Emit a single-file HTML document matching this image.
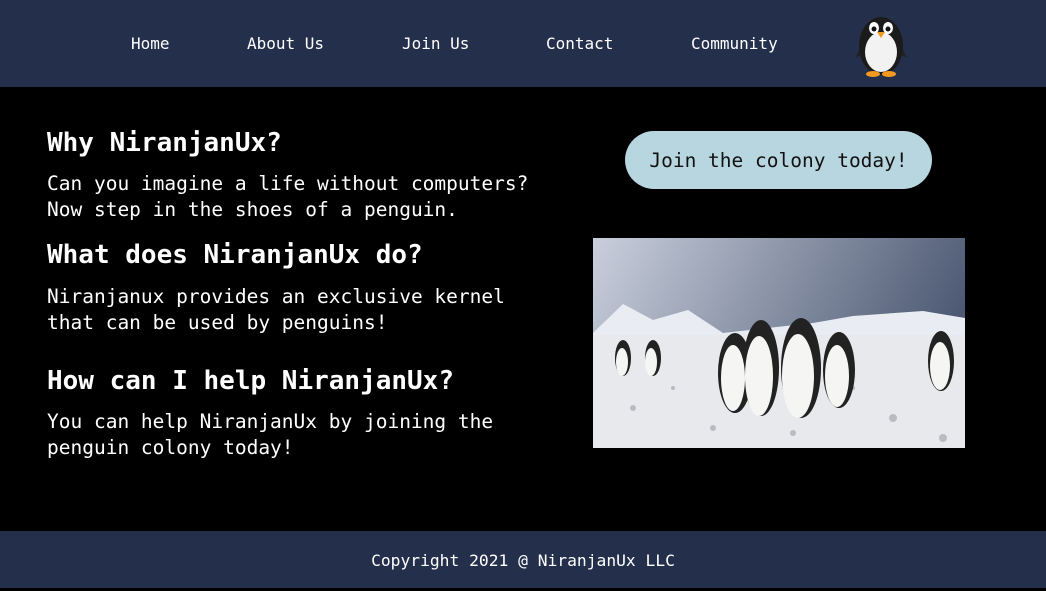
<!DOCTYPE html>
<html><head><style>
*{margin:0;padding:0;box-sizing:border-box}
body{width:1046px;height:588px;background:#000;font-family:"DejaVu Sans Mono","Liberation Mono",monospace;color:#fff;position:relative;overflow:hidden}
header{position:absolute;left:0;top:0;width:1046px;height:87px;background:#24304b}
nav a{position:absolute;top:34px;font-size:16px;color:#fff;text-decoration:none;white-space:nowrap}
footer{position:absolute;left:0;top:531px;width:1046px;height:57px;background:#24304b;text-align:center;font-size:16.3px;line-height:60px}
h2{position:absolute;left:47px;font-size:26px;font-weight:bold;white-space:nowrap}
p{position:absolute;left:47px;font-size:19.5px;line-height:26px;white-space:nowrap}
.btn{position:absolute;left:625px;top:131px;width:307px;height:58px;border-radius:29px;background:#b8d6e0;color:#111;font-size:19.5px;line-height:60px;text-align:center}
</style></head><body>
<header><nav>
<a style="left:131px">Home</a><a style="left:247px">About Us</a><a style="left:402px">Join Us</a><a style="left:546px">Contact</a><a style="left:691px">Community</a>
</nav>
<svg style="position:absolute;left:852px;top:8px" width="58" height="70" viewBox="0 0 58 70">
<path d="M8 40 L3 50 L14 44Z" fill="#222"/><path d="M50 40 L55 50 L44 44Z" fill="#222"/>
<ellipse cx="29" cy="38" rx="22" ry="29" fill="#1b1b1b"/>
<ellipse cx="29" cy="44" rx="16" ry="20" fill="#f2f2f2"/>
<ellipse cx="22" cy="20" rx="5" ry="6" fill="#fff"/><ellipse cx="36" cy="20" rx="5" ry="6" fill="#fff"/>
<circle cx="22" cy="21" r="2.5" fill="#111"/><circle cx="36" cy="21" r="2.5" fill="#111"/>
<path d="M25 24 L33 24 L29 30Z" fill="#f29a1f"/>
<ellipse cx="21" cy="66" rx="7" ry="3" fill="#f29a1f"/><ellipse cx="37" cy="66" rx="7" ry="3" fill="#f29a1f"/>
</svg>
</header>
<h2 style="top:128px">Why NiranjanUx?</h2>
<p style="top:171px">Can you imagine a life without computers?<br>Now step in the shoes of a penguin.</p>
<h2 style="top:240px">What does NiranjanUx do?</h2>
<p style="top:284px">Niranjanux provides an exclusive kernel<br>that can be used by penguins!</p>
<h2 style="top:366px">How can I help NiranjanUx?</h2>
<p style="top:409px">You can help NiranjanUx by joining the<br>penguin colony today!</p>
<div class="btn">Join the colony today!</div>
<svg style="position:absolute;left:593px;top:238px" width="372" height="210" viewBox="0 0 372 210">
<defs><linearGradient id="s" x1="0" y1="0" x2="1" y2="0.3"><stop offset="0" stop-color="#c9cfdc"/><stop offset="1" stop-color="#4e5a74"/></linearGradient></defs>
<rect width="372" height="210" fill="url(#s)"/>
<path d="M0 95 L30 66 L60 82 L95 72 L130 95 L220 85 L260 78 L330 73 L372 80 L372 100 L0 100Z" fill="#e9edf3"/>
<rect y="97" width="372" height="113" fill="#e8e9ec"/>
<g fill="#9a9ea6" opacity="0.6"><circle cx="40" cy="170" r="3"/><circle cx="120" cy="190" r="3"/><circle cx="300" cy="180" r="4"/><circle cx="350" cy="200" r="4"/><circle cx="200" cy="195" r="3"/><circle cx="80" cy="150" r="2"/><circle cx="260" cy="150" r="2"/></g>
<g fill="#222"><ellipse cx="142" cy="135" rx="17" ry="40"/><ellipse cx="168" cy="130" rx="18" ry="48"/><ellipse cx="208" cy="130" rx="20" ry="50"/><ellipse cx="246" cy="132" rx="16" ry="38"/><ellipse cx="348" cy="123" rx="13" ry="30"/><ellipse cx="30" cy="120" rx="8" ry="18"/><ellipse cx="60" cy="120" rx="8" ry="18"/></g>
<g fill="#f5f5f3"><ellipse cx="140" cy="140" rx="12" ry="33"/><ellipse cx="166" cy="138" rx="14" ry="40"/><ellipse cx="205" cy="138" rx="16" ry="42"/><ellipse cx="244" cy="138" rx="12" ry="31"/><ellipse cx="347" cy="128" rx="10" ry="24"/><ellipse cx="29" cy="124" rx="6" ry="14"/><ellipse cx="58" cy="124" rx="6" ry="14"/></g>
</svg>
<footer>Copyright 2021 @ NiranjanUx LLC</footer>
</body></html>
